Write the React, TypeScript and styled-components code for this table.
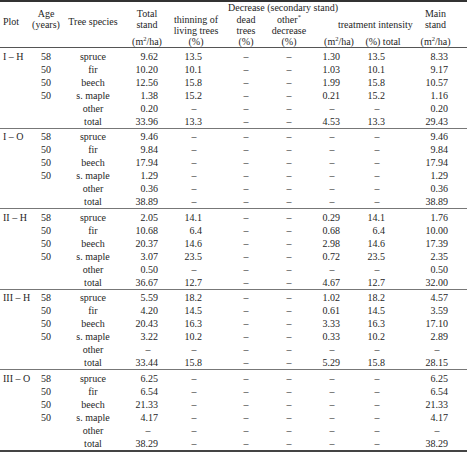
import React from "react";
import styled, { createGlobalStyle } from "styled-components";

const GlobalStyle = createGlobalStyle`
  body {
    margin: 0;
    background: #fff;
  }
`;

const Table = styled.table`
  width: 467px;
  border-collapse: collapse;
  table-layout: fixed;
  font-family: "Liberation Serif", "Times New Roman", serif;
  font-size: 10px;
  color: #262626;
  border-top: 2px solid #333;
  border-bottom: 2px solid #444;
`;

const Col = styled.col<{ $w: number }>`
  width: ${(p) => p.$w}px;
`;

const Head = styled.thead`
  border-bottom: 1px solid #555;
`;

const HeadRow = styled.tr<{ $h: number }>`
  height: ${(p) => p.$h}px;
`;

const HeadCell = styled.th<{ $align?: string; $valign?: string; $pb?: number }>`
  font-weight: normal;
  line-height: 11px;
  padding: 0 0 ${(p) => p.$pb ?? 0}px 0;
  text-align: ${(p) => p.$align ?? "center"};
  vertical-align: ${(p) => p.$valign ?? "middle"};
  white-space: nowrap;
`;

const Row = styled.tr<{ $first?: boolean; $sep?: boolean }>`
  & > td {
    height: 13px;
    padding-top: ${(p) => (p.$first ? 1.5 : 0)}px;
    border-top: ${(p) => (p.$sep ? "1px solid #777" : "none")};
  }
`;

const Cell = styled.td<{ $align?: string }>`
  line-height: 13px;
  padding: 0;
  text-align: ${(p) => p.$align ?? "center"};
  vertical-align: middle;
  white-space: nowrap;
`;

// horizontal offsets live on an inner box so the fixed column widths stay as set
const Pad = styled.span<{ $l?: number; $r?: number }>`
  display: inline-block;
  padding: 0 ${(p) => p.$r ?? 0}px 0 ${(p) => p.$l ?? 0}px;
`;

const Dash = styled.span<{ $w: number }>`
  display: inline-block;
  width: ${(p) => p.$w}px;
  text-align: center;
`;

const Sup = styled.sup`
  font-size: 6.5px;
  line-height: 0;
  vertical-align: 4px;
`;

const Unit = () => (
  <>
    (m<Sup>2</Sup>/ha)
  </>
);

type Line = [string, string, string, string, string, string, string];
type Group = { plot: string; rows: Line[] };

// species, age, total, thinning, m2, pct, main  (dead / other always –)
const D = "–";
const groups: Group[] = [
  {
    plot: "I – H",
    rows: [
      ["spruce", "58", "9.62", "13.5", "1.30", "13.5", "8.33"],
      ["fir", "50", "10.20", "10.1", "1.03", "10.1", "9.17"],
      ["beech", "50", "12.56", "15.8", "1.99", "15.8", "10.57"],
      ["s. maple", "50", "1.38", "15.2", "0.21", "15.2", "1.16"],
      ["other", "", "0.20", D, D, D, "0.20"],
      ["total", "", "33.96", "13.3", "4.53", "13.3", "29.43"],
    ],
  },
  {
    plot: "I – O",
    rows: [
      ["spruce", "58", "9.46", D, D, D, "9.46"],
      ["fir", "50", "9.84", D, D, D, "9.84"],
      ["beech", "50", "17.94", D, D, D, "17.94"],
      ["s. maple", "50", "1.29", D, D, D, "1.29"],
      ["other", "", "0.36", D, D, D, "0.36"],
      ["total", "", "38.89", D, D, D, "38.89"],
    ],
  },
  {
    plot: "II – H",
    rows: [
      ["spruce", "58", "2.05", "14.1", "0.29", "14.1", "1.76"],
      ["fir", "50", "10.68", "6.4", "0.68", "6.4", "10.00"],
      ["beech", "50", "20.37", "14.6", "2.98", "14.6", "17.39"],
      ["s. maple", "50", "3.07", "23.5", "0.72", "23.5", "2.35"],
      ["other", "", "0.50", D, D, D, "0.50"],
      ["total", "", "36.67", "12.7", "4.67", "12.7", "32.00"],
    ],
  },
  {
    plot: "III – H",
    rows: [
      ["spruce", "58", "5.59", "18.2", "1.02", "18.2", "4.57"],
      ["fir", "50", "4.20", "14.5", "0.61", "14.5", "3.59"],
      ["beech", "50", "20.43", "16.3", "3.33", "16.3", "17.10"],
      ["s. maple", "50", "3.22", "10.2", "0.33", "10.2", "2.89"],
      ["other", "", D, D, D, D, D],
      ["total", "", "33.44", "15.8", "5.29", "15.8", "28.15"],
    ],
  },
  {
    plot: "III – O",
    rows: [
      ["spruce", "58", "6.25", D, D, D, "6.25"],
      ["fir", "50", "6.54", D, D, D, "6.54"],
      ["beech", "50", "21.33", D, D, D, "21.33"],
      ["s. maple", "50", "4.17", D, D, D, "4.17"],
      ["other", "", D, D, D, D, D],
      ["total", "", "38.29", D, D, D, "38.29"],
    ],
  },
];

const widths = [32, 28, 66, 36, 68, 32, 54, 46, 42, 63];

const Num = ({ v, pr, dw }: { v: string; pr: number; dw: number }) => (
  <Cell $align="right">
    <Pad $r={pr}>{v === D ? <Dash $w={dw}>{D}</Dash> : v}</Pad>
  </Cell>
);

export default function App() {
  return (
    <>
      <GlobalStyle />
      <Table>
        <colgroup>
          {widths.map((w, i) => (
            <Col key={i} $w={w} />
          ))}
        </colgroup>
        <Head>
          <HeadRow $h={12}>
            <HeadCell rowSpan={3} $align="left" $pb={6}>
              <Pad $l={3}>Plot</Pad>
            </HeadCell>
            <HeadCell rowSpan={2}>
              Age
              <br />
              (years)
            </HeadCell>
            <HeadCell rowSpan={3} $pb={6}>
              Tree species
            </HeadCell>
            <HeadCell rowSpan={2}>
              <Pad $l={6}>
                Total
                <br />
                stand
              </Pad>
            </HeadCell>
            <HeadCell colSpan={5}>Decrease (secondary stand)</HeadCell>
            <HeadCell rowSpan={2}>
              Main
              <br />
              stand
            </HeadCell>
          </HeadRow>
          <HeadRow $h={23}>
            <HeadCell $valign="bottom">
              thinning of
              <br />
              living trees
            </HeadCell>
            <HeadCell $valign="bottom">
              dead
              <br />
              trees
            </HeadCell>
            <HeadCell $valign="bottom">
              other<Sup>*</Sup>
              <br />
              decrease
            </HeadCell>
            <HeadCell colSpan={2}>
              <Pad $l={22}>treatment intensity</Pad>
            </HeadCell>
          </HeadRow>
          <HeadRow $h={11}>
            <HeadCell />
            <HeadCell>
              <Pad $l={6}>
                <Unit />
              </Pad>
            </HeadCell>
            <HeadCell>(%)</HeadCell>
            <HeadCell>(%)</HeadCell>
            <HeadCell>(%)</HeadCell>
            <HeadCell>
              <Unit />
            </HeadCell>
            <HeadCell>(%) total</HeadCell>
            <HeadCell>
              <Unit />
            </HeadCell>
          </HeadRow>
        </Head>
        <tbody>
          {groups.map((g, gi) =>
            g.rows.map(([sp, age, total, thin, m2, pct, main], ri) => (
              <Row key={`${gi}-${ri}`} $first={ri === 0} $sep={ri === 0 && gi > 0}>
                <Cell $align="left">
                  <Pad $l={3}>{ri === 0 ? g.plot : ""}</Pad>
                </Cell>
                <Cell>{age}</Cell>
                <Cell>{sp}</Cell>
                <Num v={total} pr={4} dw={20} />
                <Num v={thin} pr={28} dw={16} />
                <Cell>{D}</Cell>
                <Cell>{D}</Cell>
                <Num v={m2} pr={22} dw={16} />
                <Num v={pct} pr={19} dw={16} />
                <Num v={main} pr={19} dw={22} />
              </Row>
            ))
          )}
        </tbody>
      </Table>
    </>
  );
}
